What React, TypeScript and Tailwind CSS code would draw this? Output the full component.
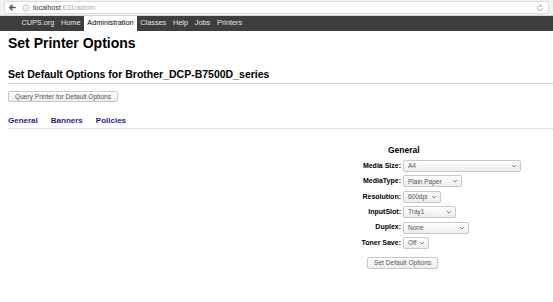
import React from "react";

function Sel({ w, text }: { w: number; text: string }) {
  return (
    <div
      className="flex h-[12px] items-center justify-between rounded-[2px] border border-[#c8c8c8] bg-gradient-to-b from-white to-[#ececec] pl-[4px] pr-[3px] text-[6.5px] text-[#555]"
      style={{ width: w }}
    >
      <span>{text}</span>
      <svg width="6" height="4" viewBox="0 0 6 4"><path d="M1 1 L3 3 L5 1" stroke="#777" strokeWidth="0.9" fill="none" /></svg>
    </div>
  );
}

export default function App() {
  const rows: [string, number, string][] = [
    ["Media Size:", 118, "A4"],
    ["MediaType:", 59, "Plain Paper"],
    ["Resolution:", 38, "600dpi"],
    ["InputSlot:", 53, "Tray1"],
    ["Duplex:", 66, "None"],
    ["Toner Save:", 26, "Off"],
  ];
  return (
    <div className="h-[302px] w-[553px] overflow-hidden bg-white font-['Liberation_Sans',Arial,sans-serif] text-black">
      {/* address bar */}
      <div className="flex h-[16px] items-center border-b border-[#d6d6d6] bg-[#f2f2f2] px-[4px]">
        <div className="flex h-[13px] flex-1 items-center rounded-[2px] border border-[#dcdcdc] bg-white pl-[3px]">
          <svg width="9" height="9" viewBox="0 0 10 10"><path d="M8.5 5 H2.5 M5 2 L2 5 L5 8" stroke="#555" strokeWidth="1.6" fill="none" /></svg>
          <svg className="ml-[5px]" width="8" height="8" viewBox="0 0 10 10"><circle cx="5" cy="5" r="4" stroke="#aaa" strokeWidth="0.9" fill="none" /><path d="M5 4.3 V7.3 M5 2.6 V3.3" stroke="#aaa" strokeWidth="1" /></svg>
          <span className="ml-[3px] text-[7px] leading-none text-[#333]">localhost<span className="text-[#aaa]">:631/admin</span></span>
          <div className="flex-1" />
          <svg className="mr-[4px]" width="8" height="8" viewBox="0 0 10 10"><path d="M8 5 A3 3 0 1 1 6.5 2.4 M6 1 L7 2.6 L5.2 3.2" stroke="#999" strokeWidth="1" fill="none" /></svg>
        </div>
      </div>
      {/* nav */}
      <div className="flex h-[15px] items-stretch bg-[#3e3e3e] pl-[18px] text-[7.3px] text-[#e6e6e6]">
        {["CUPS.org", "Home", "Administration", "Classes", "Help", "Jobs", "Printers"].map((t) => (
          <div
            key={t}
            className={
              "flex items-center px-[3.4px] " +
              (t === "Administration" ? "bg-white text-black" : "")
            }
          >
            {t}
          </div>
        ))}
      </div>
      <div className="pl-[8px]">
        <h1 className="mt-[4px] text-[14px] font-bold leading-[16px]">Set Printer Options</h1>
        <h2 className="mt-[17px] border-b border-[#d0d0d0] pb-[3px] text-[10.5px] font-bold leading-[12px]">
          Set Default Options for Brother_DCP-B7500D_series
        </h2>
        <div className="mt-[7px] flex h-[11px] w-fit items-center rounded-[2px] border border-[#c8c8c8] bg-gradient-to-b from-white to-[#ededed] px-[6px] text-[6.6px] text-[#555]">
          Query Printer for Default Options
        </div>
        <div className="mt-[14px] flex gap-[13px] border-b border-[#e2e2e2] pb-[2px] text-[8px] font-bold leading-[10px] text-[#1c1c9a]">
          <span>General</span>
          <span>Banners</span>
          <span>Policies</span>
        </div>
        <div className="ml-[343px] mt-[16px] w-[180px]">
          <div className="ml-[37px] text-[8.5px] font-bold leading-[10px]">General</div>
          <div className="mt-[5px] flex flex-col gap-[3.4px]">
            {rows.map(([l, w, v]) => (
              <div key={l} className="flex items-center">
                <div className="w-[50px] text-right text-[7px] font-bold">{l}</div>
                <div className="ml-[2px]"><Sel w={w} text={v} /></div>
              </div>
            ))}
          </div>
          <div className="ml-[16px] mt-[8px] flex h-[12px] w-fit items-center rounded-[2px] border border-[#c8c8c8] bg-gradient-to-b from-white to-[#ededed] px-[6px] text-[6.6px] text-[#555]">
            Set Default Options
          </div>
        </div>
      </div>
    </div>
  );
}
